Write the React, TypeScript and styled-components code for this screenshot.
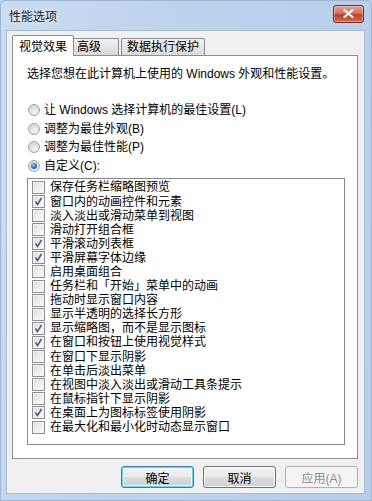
import React, { FC } from "react";
import styled, { createGlobalStyle, css } from "styled-components";

const GlobalStyle = createGlobalStyle`
  html, body {
    margin: 0;
    padding: 0;
    background: #b9d1ea;
  }
  body {
    font-family: "Liberation Sans", "Noto Sans CJK SC", sans-serif;
    font-size: 12px;
    color: #000;
  }
`;

const Frame = styled.div`
  width: 372px;
  height: 501px;
  box-sizing: border-box;
  display: flex;
  flex-direction: column;
  background: linear-gradient(100deg, #c9dcf1 0%, #bcd3ec 40%, #b6cee9 100%);
  border: 1px solid #9fb6d0;
  border-radius: 6px 6px 0 0;
  overflow: hidden;
`;

const TitleBar = styled.div`
  height: 29px;
  flex-shrink: 0;
  display: flex;
  align-items: center;
  justify-content: space-between;
  padding: 0 7px 0 8px;
`;

const Title = styled.span`
  font-size: 12px;
  line-height: 14px;
  color: #1e1e1e;
  text-shadow: 0 0 6px rgba(255, 255, 255, 0.9);
  margin-top: 2px;
`;

const CloseButton = styled.div`
  width: 31px;
  height: 18px;
  box-sizing: border-box;
  border: 1px solid #7b2a22;
  border-radius: 3px;
  background: linear-gradient(#e8a494 0%, #d7705c 45%, #c2412a 55%, #cf6a4f 100%);
  box-shadow: inset 0 0 0 1px rgba(255, 255, 255, 0.35);
  display: flex;
  align-items: center;
  justify-content: center;
  margin-top: -4px;
`;

const Client = styled.div`
  flex: 1;
  margin: 0 6px 6px 5px;
  background: #f0f0f0;
  padding: 4px 6px 0 5px;
  display: flex;
  flex-direction: column;
  border: 1px solid #a8bdd4;
`;

const TabRow = styled.div`
  display: flex;
  align-items: flex-end;
  height: 20px;
  flex-shrink: 0;
  padding-left: 1px;
  position: relative;
  z-index: 1;
`;

const Tab = styled.div<{ $active?: boolean; $width?: number; $gap?: number }>`
  box-sizing: border-box;
  height: 17px;
  padding: 0 5px;
  border: 1px solid #898c95;
  border-bottom: none;
  border-radius: 2px 2px 0 0;
  margin-left: ${(p) => (p.$gap ?? -1)}px;
  width: ${(p) => (p.$width ? `${p.$width}px` : "auto")};
  background: linear-gradient(#f3f3f3, #e5e5e5 50%, #d9d9d9);
  line-height: 16px;
  white-space: nowrap;
  ${(p) =>
    p.$active &&
    css`
      height: 21px;
      margin-bottom: -1px;
      padding: 0 6px;
      background: #fff;
      line-height: 22px;
      margin-right: -2px;
      position: relative;
      z-index: 2;
    `}
`;

const Panel = styled.div`
  flex: 1;
  box-sizing: border-box;
  background: #fff;
  border: 1px solid #898c95;
  padding: 11px 12px 13px 14px;
  display: flex;
  flex-direction: column;
`;

const Description = styled.div`
  line-height: 14px;
  height: 14px;
  white-space: nowrap;
`;

const RadioGroup = styled.div`
  margin-top: 20px;
  display: flex;
  flex-direction: column;
`;

const RadioRow = styled.label`
  height: 18.6px;
  display: flex;
  align-items: center;
  gap: 4px;
  white-space: nowrap;
  line-height: 14px;
`;

const RadioDot = styled.span<{ $checked?: boolean }>`
  width: 12px;
  height: 12px;
  box-sizing: border-box;
  border-radius: 50%;
  border: 1px solid #a5a5a5;
  background: radial-gradient(circle at 60% 70%, #f6f6f6 0%, #dcdcdc 60%, #c9c9c9 100%);
  display: flex;
  align-items: center;
  justify-content: center;
  margin-left: 1px;
  &::after {
    content: "";
    width: 6px;
    height: 6px;
    border-radius: 50%;
    display: ${(p) => (p.$checked ? "block" : "none")};
    background: radial-gradient(circle at 40% 35%, #9cd7f7 0%, #2a7bc0 45%, #0e3f7a 100%);
  }
`;

const List = styled.div`
  flex: 1;
  margin-top: 3px;
  box-sizing: border-box;
  border: 1px solid #828790;
  padding: 1px 0 0 4px;
  display: flex;
  flex-direction: column;
`;

const ItemRow = styled.label`
  height: 14.1px;
  flex-shrink: 0;
  display: flex;
  align-items: center;
  gap: 5px;
  white-space: nowrap;
  line-height: 14px;
`;

const Box = styled.span`
  width: 13px;
  height: 13px;
  box-sizing: border-box;
  border: 1px solid #8e8f8f;
  background: linear-gradient(135deg, #dcdcdc 0%, #f0f0f0 60%, #fdfdfd 100%);
  box-shadow: inset 0 0 0 1px #f4f4f4;
  display: flex;
  align-items: center;
  justify-content: center;
  flex-shrink: 0;
`;

const Footer = styled.div`
  flex-shrink: 0;
  height: 34px;
  box-sizing: border-box;
  display: flex;
  justify-content: flex-end;
  gap: 9px;
  padding-top: 7px;
`;

const Button = styled.button<{ $default?: boolean }>`
  width: 73px;
  height: 22px;
  box-sizing: border-box;
  font-family: inherit;
  font-size: 12px;
  color: #000;
  border: 1px solid #707070;
  border-radius: 3px;
  background: linear-gradient(#f2f2f2 0%, #ebebeb 48%, #dddddd 52%, #cfcfcf 100%);
  box-shadow: inset 0 0 0 1px #fcfcfc;
  padding: 0;
  ${(p) =>
    p.$default &&
    css`
      border-color: #3c7fb1;
      box-shadow: inset 0 0 0 1px #5fd2fa, inset 0 0 0 2px #f4fbfe;
    `}
  &:disabled {
    color: #8d8d8d;
    border-color: #adb2b5;
    background: #f4f4f4;
    box-shadow: none;
  }
`;

const CheckMark: FC = () => (
  <svg width="9" height="9" viewBox="0 0 9 9">
    <path d="M1.5 4.5 L3.5 7.5 L7.5 1" fill="none" stroke="#4a5d8f" strokeWidth="1.6" />
  </svg>
);

const CloseX: FC = () => (
  <svg width="11" height="9" viewBox="0 0 11 9">
    <path d="M1.5 1 L9.5 8 M9.5 1 L1.5 8" stroke="#fff" strokeWidth="2.2" strokeLinecap="round" />
  </svg>
);

const radios = [
  { label: "让 Windows 选择计算机的最佳设置(L)", checked: false },
  { label: "调整为最佳外观(B)", checked: false },
  { label: "调整为最佳性能(P)", checked: false },
  { label: "自定义(C):", checked: true },
];

const items: [string, boolean][] = [
  ["保存任务栏缩略图预览", false],
  ["窗口内的动画控件和元素", true],
  ["淡入淡出或滑动菜单到视图", false],
  ["滑动打开组合框", false],
  ["平滑滚动列表框", true],
  ["平滑屏幕字体边缘", true],
  ["启用桌面组合", false],
  ["任务栏和「开始」菜单中的动画", false],
  ["拖动时显示窗口内容", false],
  ["显示半透明的选择长方形", false],
  ["显示缩略图，而不是显示图标", true],
  ["在窗口和按钮上使用视觉样式", true],
  ["在窗口下显示阴影", false],
  ["在单击后淡出菜单", false],
  ["在视图中淡入淡出或滑动工具条提示", false],
  ["在鼠标指针下显示阴影", false],
  ["在桌面上为图标标签使用阴影", true],
  ["在最大化和最小化时动态显示窗口", false],
];

const App: FC = () => (
  <>
    <GlobalStyle />
    <Frame>
      <TitleBar>
        <Title>性能选项</Title>
        <CloseButton>
          <CloseX />
        </CloseButton>
      </TitleBar>
      <Client>
        <TabRow>
          <Tab $active>视觉效果</Tab>
          <Tab $width={48}>高级</Tab>
          <Tab $gap={2}>数据执行保护</Tab>
        </TabRow>
        <Panel>
          <Description>选择您想在此计算机上使用的 Windows 外观和性能设置。</Description>
          <RadioGroup>
            {radios.map((r) => (
              <RadioRow key={r.label}>
                <RadioDot $checked={r.checked} />
                {r.label}
              </RadioRow>
            ))}
          </RadioGroup>
          <List>
            {items.map(([label, checked]) => (
              <ItemRow key={label}>
                <Box>{checked && <CheckMark />}</Box>
                {label}
              </ItemRow>
            ))}
          </List>
        </Panel>
        <Footer>
          <Button $default>确定</Button>
          <Button>取消</Button>
          <Button disabled>应用(A)</Button>
        </Footer>
      </Client>
    </Frame>
  </>
);

export default App;
